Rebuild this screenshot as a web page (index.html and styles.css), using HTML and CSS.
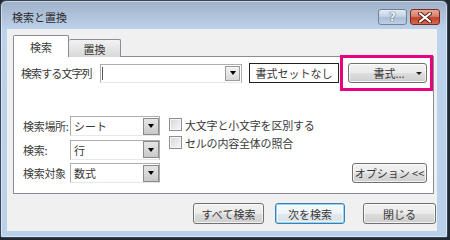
FILE: index.html
```html
<!DOCTYPE html>
<html lang="ja">
<head>
  <meta charset="UTF-8">
  <title>検索と置換</title>
  <link rel="stylesheet" href="styles.css">
</head>
<body>
  <div class="window">
    <div class="titlebar">
      <span class="title">検索と置換</span>
      <div class="caption-buttons">
        <button class="cap help">?</button>
        <button class="cap close">
          <svg width="14" height="11" viewBox="0 0 14 11">
            <path d="M2 1.5 L12 9.5 M12 1.5 L2 9.5" stroke="#5a1a10" stroke-width="4" stroke-linecap="round"/>
            <path d="M2 1.5 L12 9.5 M12 1.5 L2 9.5" stroke="#fff" stroke-width="2.2" stroke-linecap="round"/>
          </svg>
        </button>
      </div>
    </div>

    <div class="client">
      <div class="tabs">
        <div class="tab active">検索</div>
        <div class="tab">置換</div>
      </div>

      <div class="panel">
        <div class="find-row">
          <span class="find-label">検索する文字列</span>
          <div class="combo find-combo">
            <span class="caret"></span>
            <span class="drop"><i class="arrow"></i></span>
          </div>
          <div class="format-box">書式セットなし</div>
          <div class="format-wrap">
            <button class="btn format-btn">書式...<i class="arrow small"></i></button>
          </div>
        </div>

        <div class="options">
          <span class="opt-label">検索場所:</span>
          <div class="combo"><span class="value">シート</span><span class="drop dark"><i class="arrow"></i></span></div>

          <div class="checks">
            <label class="check"><span class="box"></span>大文字と小文字を区別する</label>
            <label class="check"><span class="box"></span>セルの内容全体の照合</label>
          </div>

          <span class="opt-label">検索:</span>
          <div class="combo"><span class="value">行</span><span class="drop dark"><i class="arrow"></i></span></div>

          <span class="opt-label">検索対象</span>
          <div class="combo"><span class="value">数式</span><span class="drop dark"><i class="arrow"></i></span></div>

          <button class="btn options-btn">オプション &lt;&lt;</button>
        </div>
      </div>

      <div class="footer">
        <button class="btn footer-btn">すべて検索</button>
        <button class="btn footer-btn default">次を検索</button>
        <button class="btn footer-btn close-btn">閉じる</button>
      </div>
    </div>
  </div>
</body>
</html>
```

FILE: styles.css
```css
body {
  margin: 0;
  background: #1f2a33;
  font-family: "Noto Sans CJK JP", "Noto Sans", sans-serif;
  font-size: 11px;
  color: #383838;
}

.window {
  width: 446px;
  height: 236px;
  border: 1px solid #3b4756;
  border-radius: 6px 6px 2px 2px;
  background: linear-gradient(to bottom, #9fb1c9 0px, #b4c8e0 20px, #bdd3ec 29px, #b9d1ea 100%);
  display: flex;
  flex-direction: column;
  box-shadow: inset 0 0 0 1px rgba(255,255,255,0.45);
}

.titlebar {
  height: 28px;
  display: flex;
  justify-content: space-between;
  align-items: flex-start;
}

.title {
  padding: 8px 0 0 11px;
  font-size: 11px;
  color: #2a2a2a;
  line-height: 16px;
}

.caption-buttons {
  display: flex;
  gap: 3px;
  padding: 8px 7px 0 0;
}

.cap {
  height: 16px;
  margin: 0;
  padding: 0;
  display: flex;
  align-items: center;
  justify-content: center;
  border-radius: 3px;
}

.help {
  width: 29px;
  border: 1px solid #6f8299;
  background: linear-gradient(to bottom, #e3ebf5 0%, #c4d3e5 45%, #a9bdd5 55%, #bcd0e6 100%);
  color: #eef3f8;
  font-family: "DejaVu Sans", sans-serif;
  font-weight: bold;
  font-size: 12px;
  text-shadow: 0 0 1px #3b4a5d, 0 0 1px #3b4a5d;
}

.close {
  width: 30px;
  border: 1px solid #7b2a1c;
  background: linear-gradient(to bottom, #e8a896 0%, #d8806a 45%, #c2432b 55%, #d4684f 100%);
}

.client {
  flex: 1;
  margin: 0 10px 6px 6px;
  background: #f0f0f0;
  padding: 7px 3px 0 6px;
  display: flex;
  flex-direction: column;
}

.tabs {
  display: flex;
  align-items: flex-end;
  height: 21px;
  position: relative;
  z-index: 1;
  margin-bottom: -1px;
}

.tab {
  width: 51px;
  height: 17px;
  border: 1px solid #898c95;
  border-bottom: none;
  border-left: none;
  background: linear-gradient(to bottom, #f2f2f2, #d9d9d9);
  display: flex;
  align-items: center;
  justify-content: center;
  border-radius: 2px 2px 0 0;
}

.tab.active {
  width: 54px;
  height: 21px;
  border-left: 1px solid #898c95;
  background: #fff;
}

.panel {
  height: 121px;
  border: 1px solid #898c95;
  background: #fff;
  padding: 6px 6px 9px 7px;
}

.find-row {
  display: flex;
  align-items: center;
  height: 20px;
}

.find-label {
  width: 79px;
  letter-spacing: -0.9px;
}

.combo {
  height: 17px;
  border: 1px solid #abadb3;
  border-bottom-color: #e3e9ef;
  background: #fff;
  display: flex;
  align-items: center;
  justify-content: space-between;
  box-sizing: content-box;
}

.find-combo {
  width: 140px;
}

.caret {
  width: 1px;
  height: 13px;
  background: #555;
  margin-left: 1px;
}

.value {
  padding-left: 3px;
}

.drop {
  width: 15px;
  height: 15px;
  margin-right: 1px;
  border: 1px solid #9a9a9a;
  background: linear-gradient(to bottom, #f4f4f4, #d8d8d8);
  display: flex;
  align-items: center;
  justify-content: center;
  box-sizing: border-box;
}

.drop.dark {
  height: 17px;
  width: 16px;
  margin-right: 0;
  border-color: #8a8a8a;
  background: linear-gradient(to bottom, #e6e6e6, #c9c9c9);
}

.arrow {
  width: 0;
  height: 0;
  border-left: 3.5px solid transparent;
  border-right: 3.5px solid transparent;
  border-top: 4px solid #000;
}

.arrow.small {
  border-left-width: 3px;
  border-right-width: 3px;
  border-top-width: 3px;
  border-top-color: #222;
}

.format-box {
  width: 88px;
  height: 18px;
  margin-left: 7px;
  border: 1px solid #222;
  display: flex;
  align-items: center;
  justify-content: center;
}

.format-wrap {
  position: relative;
  margin-left: 9px;
}

/* pink annotation around the format button */
.format-wrap::after {
  content: "";
  position: absolute;
  top: -8px;
  bottom: -8px;
  left: -8px;
  right: -6px;
  border: 3px solid #e8007e;
  pointer-events: none;
}

.btn {
  margin: 0;
  padding: 0;
  font-family: inherit;
  font-size: 11px;
  color: #383838;
  border: 1px solid #707070;
  border-radius: 3px;
  background: linear-gradient(to bottom, #f2f2f2 0%, #ebebeb 50%, #dddddd 51%, #cfcfcf 100%);
  box-shadow: inset 0 0 0 1px rgba(255,255,255,0.7);
  display: flex;
  align-items: center;
  justify-content: center;
}

.format-btn {
  width: 79px;
  height: 20px;
  position: relative;
  padding-left: 3px;
}

.format-btn .arrow {
  position: absolute;
  right: 4px;
  top: 8px;
}

.options {
  margin-top: 33px;
  display: grid;
  grid-template-columns: 49px 90px 1fr auto;
  grid-template-rows: 20px 20px 20px;
  row-gap: 3.5px;
  align-items: center;
}

.opt-label {
  padding-left: 2px;
  letter-spacing: -0.3px;
}

.combo:not(.find-combo) {
  width: 88px;
  height: 18px;
}

.checks {
  grid-column: 3 / span 2;
  grid-row: 1 / span 2;
  align-self: start;
  padding: 2px 0 0 9px;
  display: flex;
  flex-direction: column;
  gap: 5px;
}

.check {
  display: flex;
  align-items: center;
  gap: 3px;
  height: 13px;
  letter-spacing: -0.2px;
}

.box {
  width: 11px;
  height: 11px;
  border: 1px solid #8f8f8f;
  background: linear-gradient(135deg, #d2d6dc, #f7f7f7);
  box-shadow: inset 0 0 0 1px #f4f4f4;
}

.options-btn {
  grid-column: 4;
  grid-row: 3;
  width: 75px;
  height: 20px;
}

.footer {
  display: flex;
  justify-content: flex-end;
  padding-top: 9px;
  margin-right: -2px;
}

.footer-btn {
  width: 71px;
  height: 21px;
}

.footer-btn.default {
  width: 70px;
  margin-left: 11px;
  border-color: #3c7fb1;
  box-shadow: inset 0 0 0 1px #8fd3f5, inset 0 0 0 2px rgba(255,255,255,0.6);
  background: linear-gradient(to bottom, #f6fafc 0%, #eef4f8 50%, #e2e9ee 51%, #d9e1e7 100%);
}

.footer-btn.close-btn {
  width: 73px;
  margin-left: 18px;
}
```
